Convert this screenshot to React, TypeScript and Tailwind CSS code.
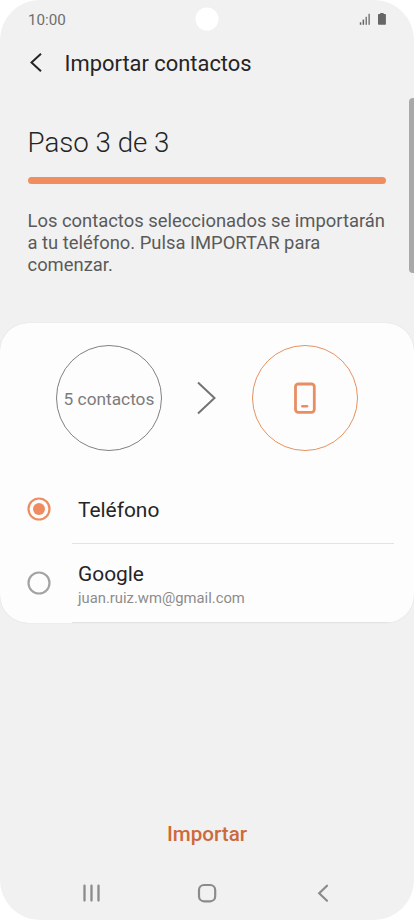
import { clsx } from 'clsx';

interface Account {
  id: string;
  name: string;
  email?: string;
}

const ACCOUNTS: Account[] = [
  { id: 'phone', name: 'Teléfono' },
  { id: 'google', name: 'Google', email: 'juan.ruiz.wm@gmail.com' },
];

function StatusBar() {
  return (
    <div className="relative flex h-10 shrink-0 items-center justify-between pr-7 pl-7">
      <span className="text-[15.2px] leading-5 text-[#6e6e6e]">10:00</span>
      {/* Camera cutout */}
      <svg className="absolute top-[7px] left-[195px]" width="24" height="24" viewBox="0 0 24 24">
        <circle cx="12" cy="12" r="11.5" fill="#fff" />
      </svg>
      <svg width="28" height="14" viewBox="0 0 28 14" className="mb-[2px]" fill="#666">
        <rect x="1.8" y="10.3" width="1.5" height="2.5" />
        <rect x="4.6" y="7.6" width="1.5" height="5.2" />
        <rect x="7.5" y="4.8" width="1.5" height="8" opacity=".85" />
        <rect x="10.4" y="1.8" width="1.5" height="11" opacity=".85" />
        <path d="M22.2 1h3.4v1h1.6q.7 0 .7.7v9.4q0 .7-.7.7h-6.5q-.7 0-.7-.7V2.7q0-.7.7-.7h1.5z" />
      </svg>
    </div>
  );
}

function Radio({ checked }: { checked: boolean }) {
  return (
    <svg
      width="24"
      height="24"
      viewBox="0 0 24 24"
      className={clsx('shrink-0', checked ? 'text-[#ee8c5f]' : 'mb-px text-[#a3a3a3]')}
    >
      <circle cx="12" cy="12" r="10.5" fill="none" stroke="currentColor" strokeWidth="2.2" />
      {checked && <circle cx="12" cy="12" r="6" fill="currentColor" />}
    </svg>
  );
}

function NavBar() {
  return (
    <div className="flex h-[54px] shrink-0 items-center justify-between pr-[82px] pl-[81px] text-[#8b8b8b]">
      <svg width="20" height="20" viewBox="0 0 20 20" fill="none" stroke="currentColor" strokeWidth="2.3" strokeLinecap="round">
        <path d="M3.5 2.7v14.8M10.5 2.7v14.8M17.5 2.7v14.8" />
      </svg>
      <svg width="20" height="20" viewBox="0 0 20 20" fill="none" stroke="currentColor" strokeWidth="2.2">
        <rect x="2" y="2" width="16.2" height="16.3" rx="5" />
      </svg>
      <svg width="20" height="20" viewBox="0 0 20 20" fill="none" stroke="currentColor" strokeWidth="2.2" strokeLinecap="round">
        <path d="M15 2.7L7.2 10.2l7.8 7.5" />
      </svg>
    </div>
  );
}

export default function App() {
  const selected = 'phone';

  return (
    <div className="h-[920px] w-[414px] overflow-hidden bg-white font-[Roboto,sans-serif]">
      <div className="relative flex h-full flex-col overflow-hidden rounded-[40px] bg-[#f1f1f1]">
        <StatusBar />

        <header className="flex h-[46px] shrink-0 items-center gap-[19.5px] pl-[28px]">
          <svg width="17" height="22" viewBox="0 0 17 22" fill="none" stroke="#252525" strokeWidth="2">
            <path d="M13 1.8L3.5 10.5L13 19.3" />
          </svg>
          <h1 className="pt-px text-[21.9px] leading-[26px] text-[#252525]">Importar contactos</h1>
        </header>

        <section className="h-[237px] shrink-0 pt-[41px] pr-7 pl-[27.5px]">
          <h2 className="text-[27.7px] leading-8 font-light text-[#252525]">Paso 3 de 3</h2>
          <div className="mt-[18px] h-[7px] rounded-full bg-[#f08e60]" />
          <p className="mt-[26px] text-[18.4px] leading-[22px] whitespace-nowrap text-[#5a5a5a]">
            Los contactos seleccionados se importarán
            <br />a tu teléfono. Pulsa IMPORTAR para
            <br />
            comenzar.
          </p>
        </section>

        {/* Scroll indicator */}
        <div className="absolute top-[98px] left-[408.5px] h-[175px] w-[9px] rounded-[4px] bg-[#a9a9a9]" />

        <main className="flex h-[300px] shrink-0 flex-col overflow-hidden rounded-[28px] bg-[#fdfdfd] shadow-[0_0_1px_#ccc]">
          <div className="flex items-center pt-[22px] pl-14">
            <div className="flex h-[106px] w-[106px] items-center justify-center rounded-full border border-[#808080] pt-[3px] text-[17.3px] whitespace-nowrap text-[#7c7c7c]">
              5 contactos
            </div>
            <svg width="20" height="36" viewBox="0 0 20 36" className="mr-9 ml-[34px]" fill="none" stroke="#737373" strokeWidth="2">
              <path d="M2 2.5L18.5 18L2 33.5" />
            </svg>
            <div className="flex h-[106px] w-[106px] items-center justify-center rounded-full border border-[#e6915f]">
              <svg width="24" height="34" viewBox="0 0 24 34" fill="none" stroke="#e98e63">
                <rect x="2.5" y="3" width="18.8" height="28.4" rx="2.8" strokeWidth="2.8" />
                <path d="M9.3 25.3h4.8" strokeWidth="2.4" strokeLinecap="round" />
              </svg>
            </div>
          </div>

          <ul className="mt-[22px] flex flex-1 flex-col">
            {ACCOUNTS.map((account) => (
              <li
                key={account.id}
                className={clsx('flex items-center pl-[27px]', account.email ? 'h-[79px]' : 'h-[71px]')}
              >
                <Radio checked={account.id === selected} />
                <div
                  className={clsx(
                    'ml-[21px] flex h-full flex-1 flex-col justify-center border-b border-[#e3e3e3] pl-[6px]',
                    account.email ? 'mr-6 pt-1' : 'mr-5 pt-[3px]'
                  )}
                >
                  <span className="text-[20.9px] leading-[26px] text-[#252525]">{account.name}</span>
                  {account.email && (
                    <span className="text-[14.8px] leading-[22px] text-[#8c8c8c]">{account.email}</span>
                  )}
                </div>
              </li>
            ))}
          </ul>
        </main>

        <div className="flex flex-1 items-end justify-center pb-5">
          <button className="text-[20.6px] leading-6 font-medium text-[#cd6a39]">Importar</button>
        </div>

        <NavBar />
      </div>
    </div>
  );
}
